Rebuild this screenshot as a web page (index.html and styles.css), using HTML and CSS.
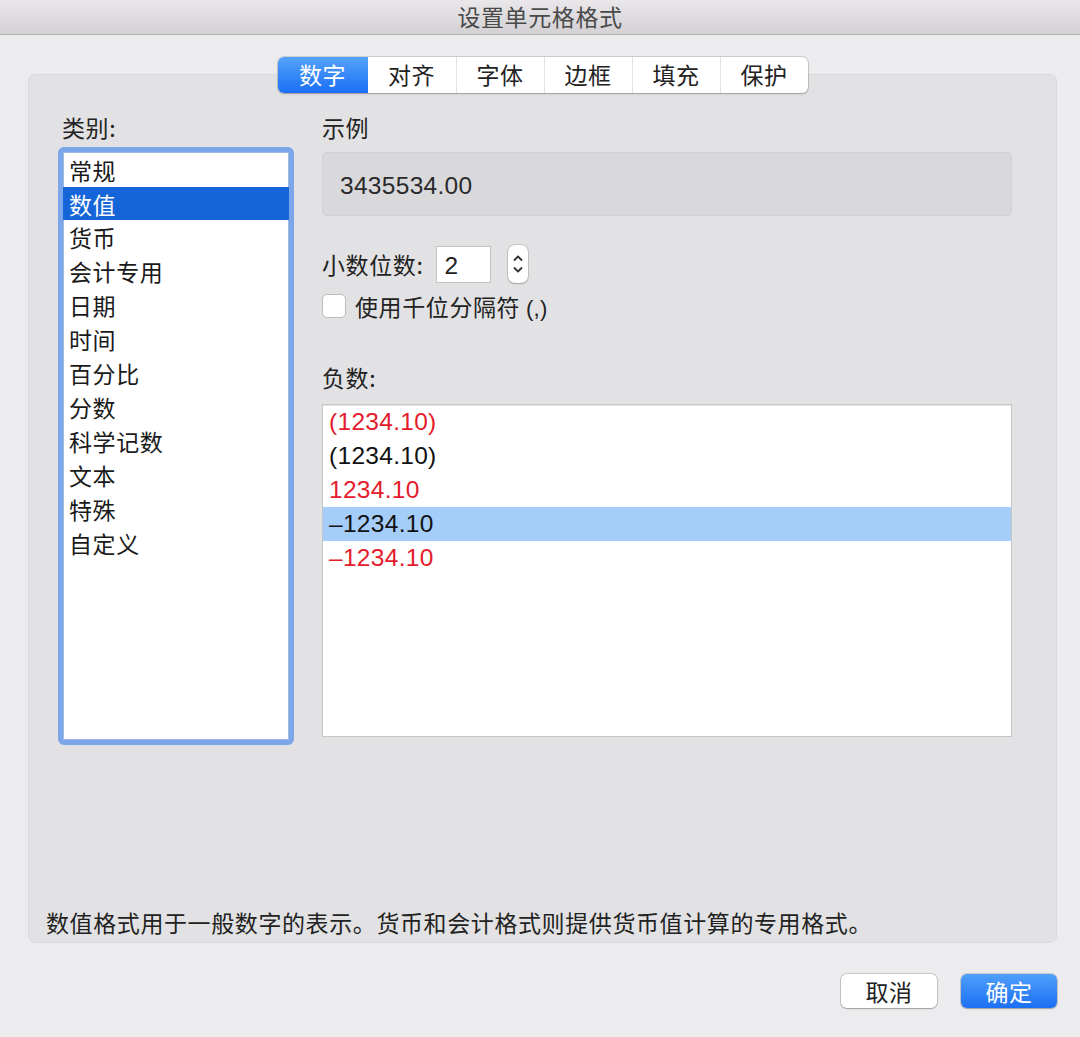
FILE: index.html
```html
<!DOCTYPE html>
<html lang="zh-CN">
<head>
  <meta charset="UTF-8" />
  <title>设置单元格格式</title>
  <link rel="stylesheet" href="styles.css">
</head>
<body>
  <div class="dialog">
    <div class="titlebar">设置单元格格式</div>
    <div class="window">
      <div class="tabs">
        <div class="tab active">数字</div>
        <div class="tab">对齐</div>
        <div class="tab">字体</div>
        <div class="tab">边框</div>
        <div class="tab">填充</div>
        <div class="tab">保护</div>
      </div>
      <div class="group">
        <div class="panes">
          <div class="left">
            <div class="label">类别:</div>
            <div class="category-list">
              <div class="item">常规</div>
              <div class="item selected">数值</div>
              <div class="item">货币</div>
              <div class="item">会计专用</div>
              <div class="item">日期</div>
              <div class="item">时间</div>
              <div class="item">百分比</div>
              <div class="item">分数</div>
              <div class="item">科学记数</div>
              <div class="item">文本</div>
              <div class="item">特殊</div>
              <div class="item">自定义</div>
            </div>
          </div>
          <div class="right">
            <div class="label">示例</div>
            <div class="sample"><span class="num">3435534.00</span></div>
            <div class="decimals">
              <span>小数位数:</span>
              <div class="num-input"><span class="num">2</span></div>
              <div class="stepper">
                <svg width="20" height="38" viewBox="0 0 20 38">
                  <path d="M6.5 15 L10 11.5 L13.5 15" fill="none" stroke="#333" stroke-width="1.8" stroke-linecap="round" stroke-linejoin="round"/>
                  <path d="M6.5 23 L10 26.5 L13.5 23" fill="none" stroke="#333" stroke-width="1.8" stroke-linecap="round" stroke-linejoin="round"/>
                </svg>
              </div>
            </div>
            <div class="check-row">
              <div class="checkbox"></div>
              <span>使用千位分隔符 <span class="num">(,)</span></span>
            </div>
            <div class="label neg-label">负数:</div>
            <div class="neg-list">
              <div class="neg red"><span class="num">(1234.10)</span></div>
              <div class="neg"><span class="num">(1234.10)</span></div>
              <div class="neg red"><span class="num">1234.10</span></div>
              <div class="neg selected"><span class="num">–1234.10</span></div>
              <div class="neg red"><span class="num">–1234.10</span></div>
            </div>
          </div>
        </div>
        <div class="description">数值格式用于一般数字的表示。货币和会计格式则提供货币值计算的专用格式。</div>
      </div>
      <div class="buttons">
        <button class="btn">取消</button>
        <button class="btn primary">确定</button>
      </div>
    </div>
  </div>
</body>
</html>
```

FILE: styles.css
```css
* {
  box-sizing: border-box; margin: 0; padding: 0;
}

body {
  background: #ececee;
  font-family: "Noto Sans CJK SC", "Liberation Sans", sans-serif;
  font-size: 23px;
  letter-spacing: 0.6px;
  color: #222;
}

.dialog {
  width: 1080px;
  height: 1037px;
}

.titlebar {
  height: 35px;
  line-height: 33px;
  text-align: center;
  color: #4a4a4a;
  font-size: 23px;
  background: linear-gradient(#e9e7e9, #d3d1d3);
  border-bottom: 1px solid #b4b4b4;
}

.window {
  display: flex;
  flex-direction: column;
  padding: 22px 23px 0 28px;
}

.tabs {
  display: flex;
  align-self: center;
  height: 36px;
  margin-bottom: -19px;
  position: relative;
  z-index: 1;
  background: #fff;
  border-radius: 6px;
  box-shadow: 0 0 0 1px rgba(0, 0, 0, 0.12), 0 1px 2px rgba(0, 0, 0, 0.22);
}

.tab {
  width: 88px;
  line-height: 35px;
  text-align: center;
  color: #222;
  border-left: 1px solid #e2e2e2;
}

.tab:first-child {
  width: 90px;
  border-left: none;
}

.tab.active {
  color: #fff;
  border-radius: 6px 0 0 6px;
  background: linear-gradient(#55a2fb, #1b6ff5);
}

.tab.active + .tab {
  border-left: none;
}

.group {
  height: 869px;
  display: flex;
  flex-direction: column;
  background: #e2e2e4;
  border: 1px solid #dadadc;
  border-radius: 7px;
  padding: 38px 44px 6px 17px;
}

.panes {
  flex: 1;
  display: flex;
}

.label {
  line-height: 28px;
  color: #222;
}

.left {
  width: 236px;
  margin-left: 12px;
  display: flex;
  flex-direction: column;
}

.left .label {
  margin-left: 4px;
}

.category-list {
  margin-top: 6px;
  height: 598px;
  background: #fff;
  border: 5px solid #7ba7ea;
  border-radius: 6px;
  box-shadow: inset 0 0 0 1px #9db9e2;
  padding-top: 1px;
}

.item {
  height: 34px;
  line-height: 34px;
  padding-left: 6px;
  color: #1a1a1a;
}

.item.selected {
  background: #1565d8;
  color: #fff;
  height: 33px;
}

.right {
  flex: 1;
  margin-left: 28px;
  display: flex;
  flex-direction: column;
}

.num {
  font-family: "Liberation Sans", "Noto Sans CJK SC", sans-serif;
  font-size: 24.5px;
  letter-spacing: 0.3px;
}

.sample {
  margin-top: 11px;
  height: 64px;
  background: #d9d9db;
  border: 1px solid #d2d2d4;
  border-radius: 5px;
  padding-left: 17px;
  line-height: 62px;
  color: #2a2a2a;
}

.decimals {
  margin-top: 29px;
  display: flex;
  align-items: center;
  height: 38px;
}

.num-input {
  margin-left: 13px;
  width: 55px;
  height: 37px;
  background: #fff;
  border: 1px solid #c2c2c2;
  line-height: 35px;
  padding-left: 7px;
  color: #222;
}

.stepper {
  margin-left: 17px;
  width: 20px;
  height: 38px;
  background: #fff;
  border-radius: 7px;
  box-shadow: 0 0 0 1px rgba(0, 0, 0, 0.12), 0 1px 1.5px rgba(0, 0, 0, 0.2);
}

.stepper svg {
  display: block;
}

.check-row {
  margin-top: 9px;
  display: flex;
  align-items: center;
  height: 28px;
}

.checkbox {
  width: 24px;
  height: 24px;
  background: #fff;
  border: 1px solid #bcbcbc;
  border-radius: 5px;
  margin-right: 9px;
}

.check-row .num {
  font-size: 22px;
}

.neg-label {
  margin-top: 43px;
}

.neg-list {
  margin-top: 13px;
  height: 333px;
  background: #fff;
  border: 1px solid #c6c6c6;
  box-shadow: inset 0 1px 0 #e6e6e6;
}

.neg {
  height: 34px;
  line-height: 30px;
  padding-left: 6px;
  color: #111;
}

.neg.red {
  color: #e41b2c;
}

.neg.selected {
  background: #a5cdfa;
}

.description {
  line-height: 28px;
  color: #222;
}

.buttons {
  display: flex;
  justify-content: flex-end;
  gap: 24px;
  margin-top: 31px;
}

.btn {
  width: 96px;
  height: 34px;
  font-family: "Noto Sans CJK SC", "Liberation Sans", sans-serif;
  font-size: 23px;
  letter-spacing: 0.6px;
  color: #222;
  background: #fff;
  border: none;
  border-radius: 6px;
  box-shadow: 0 0 0 1px rgba(0, 0, 0, 0.15), 0 1px 1.5px rgba(0, 0, 0, 0.2);
}

.btn.primary {
  color: #fff;
  background: linear-gradient(#4f9ffb, #1c6ff3);
}
```
